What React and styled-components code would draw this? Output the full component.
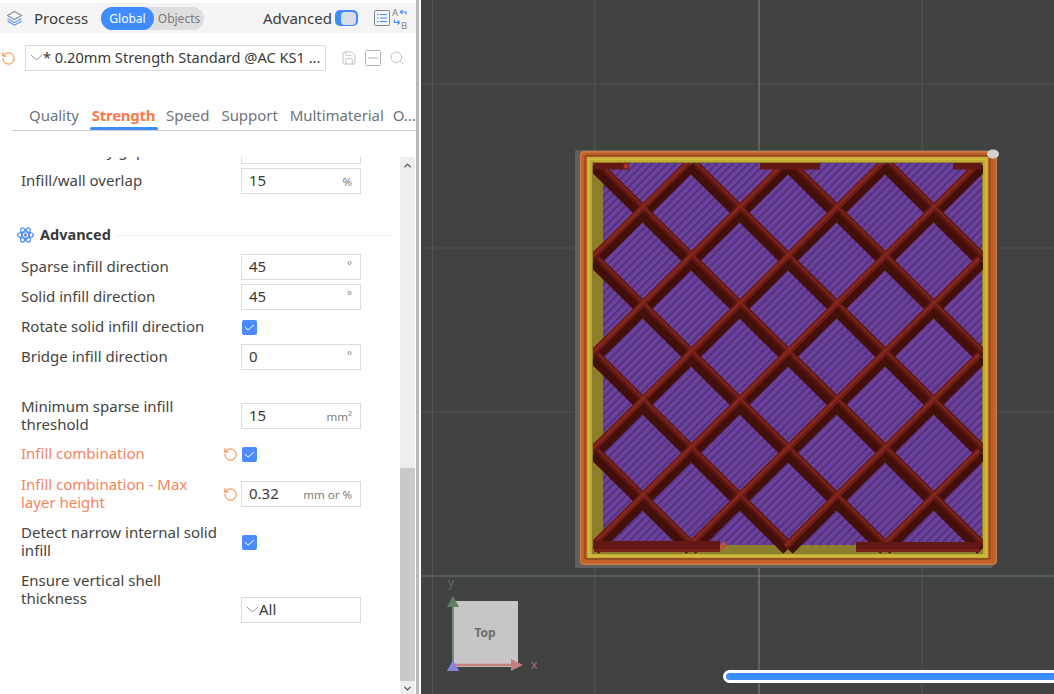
import React from "react";
import styled, { createGlobalStyle } from "styled-components";
import { RotateCcw, Save, Search, ChevronUp, ChevronDown } from "lucide-react";

const GlobalStyle = createGlobalStyle`
  html, body { margin: 0; padding: 0; height: 100%; overflow: hidden; background: #fff; }
  body { font-family: "Noto Sans", "Liberation Sans", sans-serif; color: #3a3a3a; }
`;

const Page = styled.div`
  display: flex;
  width: 1054px;
  height: 694px;
  overflow: hidden;
`;

const Sidebar = styled.div`
  flex: 0 0 416px;
  width: 416px;
  min-width: 0;
  display: flex;
  flex-direction: column;
  padding-top: 3px;
  box-sizing: border-box;
  background: #fff;
  overflow: hidden;
`;

const Divider = styled.div`
  flex: 0 0 3px;
  background: #b9b9b9;
  border-right: 2px solid #fff;
`;

const Header = styled.div`
  flex: 0 0 30px;
  display: flex;
  align-items: center;
  background: #f5f5f5;
  padding-left: 6px;
`;

const HeaderTitle = styled.span`
  font-size: 15px;
  margin-left: 11px;
  width: 67px;
  color: #3c3c3c;
`;

const ModePill = styled.div`
  display: flex;
  align-items: center;
  width: 103px;
  height: 23px;
  border-radius: 12px;
  background: #dedede;
  font-size: 12px;
`;

const ModeOption = styled.div`
  height: 100%;
  width: ${p => (p.$active ? "53px" : "50px")};
  display: flex;
  align-items: center;
  justify-content: center;
  border-radius: 12px;
  background: ${p => (p.$active ? "#3f8cff" : "transparent")};
  color: ${p => (p.$active ? "#fff" : "#7b7b7b")};
`;

const AdvancedLabel = styled.span`
  font-size: 15px;
  margin-left: 59px;
  width: 72px;
  color: #3c3c3c;
`;

const Switch = styled.div`
  width: 23px;
  height: 16px;
  border-radius: 5px;
  background: #3f8cff;
  display: flex;
  align-items: center;
  justify-content: flex-end;
  padding-right: 2px;
  box-sizing: border-box;
`;

const SwitchKnob = styled.div`
  width: 15px;
  height: 13px;
  border-radius: 4px;
  background: #d8dde8;
`;

const HeaderIcons = styled.div`
  display: flex;
  align-items: center;
  gap: 2px;
  margin-left: 16px;
`;

const PresetRow = styled.div`
  flex: 0 0 26px;
  display: flex;
  align-items: center;
  margin-top: 12px;
  padding-left: 1px;
`;

const OrangeReset = styled(RotateCcw)`
  color: #ff7a1a;
  flex: none;
`;

const PresetBox = styled.div`
  width: 301px;
  height: 26px;
  margin-left: 9px;
  border: 1px solid #dadada;
  box-sizing: border-box;
  display: flex;
  align-items: center;
  padding: 0 0 2px 4px;
  font-size: 14.6px;
  color: #3a3a3a;
  white-space: nowrap;
  overflow: hidden;
`;

const PresetTools = styled.div`
  display: flex;
  align-items: center;
  gap: 8px;
  margin-left: 15px;
  color: #b4b4b4;
`;

const Tabs = styled.div`
  flex: 0 0 41px;
  display: flex;
  align-items: flex-start;
  margin: 19px 0 0 12px;
  padding: 15px 0 0 17px;
  box-sizing: border-box;
  border-bottom: 1px solid #cfcfcf;
  font-size: 15px;
  white-space: nowrap;
`;

const Tab = styled.div`
  position: relative;
  margin-right: ${p => p.$gap}px;
  color: ${p => (p.$active ? "#f97a50" : "#6d7480")};
  font-weight: ${p => (p.$active ? 700 : 400)};
  letter-spacing: ${p => (p.$active ? "-0.3px" : "-0.05px")};
  line-height: 20px;
  &::after {
    content: "";
    display: ${p => (p.$active ? "block" : "none")};
    position: absolute;
    left: -2px;
    right: -3px;
    top: 22px;
    height: 3px;
    border-radius: 2px;
    background: #3f8cff;
  }
`;

const SettingsArea = styled.div`
  flex: 1;
  min-height: 0;
  display: flex;
  margin-top: 26px;
  overflow: hidden;
`;

const SettingsList = styled.div`
  flex: 1;
  margin-top: -19px;
`;

const Scrollbar = styled.div`
  flex: 0 0 15px;
  margin-right: 1px;
  background: #eeeeee;
  display: flex;
  flex-direction: column;
  align-items: center;
  color: #555;
`;

const ScrollThumb = styled.div`
  width: 100%;
  flex: 0 0 213px;
  margin-top: 311px;
  background: #c9c9c9;
`;

const Row = styled.div`
  display: flex;
  align-items: ${p => (p.$top ? "flex-start" : "center")};
  min-height: 26px;
  margin-top: ${p => p.$gap ?? 4}px;
`;

const Label = styled.div`
  flex: 0 0 200px;
  margin: -1px 0 1px 21px;
  font-size: 15px;
  line-height: 18px;
  color: ${p => (p.$changed ? "#f7845c" : "#444444")};
`;

const ResetSlot = styled.div`
  flex: 0 0 20px;
  display: flex;
  align-items: center;
  padding-left: 2px;
  box-sizing: border-box;
`;

const Field = styled.div`
  width: 120px;
  height: 26px;
  margin-top: ${p => p.$offset || 0}px;
  box-sizing: border-box;
  border: 1px solid #dcdcdc;
  display: flex;
  align-items: center;
  justify-content: ${p => (p.$select ? "flex-start" : "space-between")};
  padding: 0 8px 2px ${p => (p.$select ? 4 : 7)}px;
  font-size: 15px;
  color: #3a3a3a;
`;

const Unit = styled.span`
  font-size: 11.5px;
  color: #7d7d7d;
  margin-top: ${p => (p.$raise ? "-4px" : "3px")};
`;

const Check = styled.div`
  width: 15px;
  height: 15px;
  margin-left: 1px;
  border-radius: 2px;
  background: #4a8cff;
  display: flex;
  align-items: center;
  justify-content: center;
`;

const SectionHead = styled.div`
  display: flex;
  align-items: center;
  height: 18px;
  margin: 32px 7px 10px 17px;
`;

const SectionTitle = styled.span`
  margin: 0 5px 2px 6px;
  font-size: 14.5px;
  font-weight: 700;
  color: #3a3a3a;
`;

const SectionRule = styled.div`
  flex: 1;
  height: 1px;
  background: #eeeeee;
`;

const Viewport = styled.div`
  position: relative;
  flex: 1;
  background: #414342;
  overflow: hidden;
`;

const Scene = styled.svg`
  display: block;
  width: 633px;
  height: 694px;
`;

const ProgressBar = styled.div`
  position: absolute;
  left: 302px;
  right: -20px;
  top: 670px;
  height: 13px;
  box-sizing: border-box;
  border: 3px solid #fff;
  border-radius: 7px;
  background: #3f8cff;
`;

const Chevron = ({ color = "#9a9a9a" }) => (
  <svg width="13" height="7" viewBox="0 0 13 7" style={{ flex: "none" }}>
    <polyline points="1,1 6.5,6 12,1" fill="none" stroke={color} strokeWidth="1" />
  </svg>
);

const LayersIcon = () => (
  <svg width="17" height="17" viewBox="0 0 17 17">
    <path d="M8.5 1.5 L15.5 5.5 L8.5 9.5 L1.5 5.5 Z" fill="none" stroke="#8a8f96" strokeWidth="1.1" />
    <path d="M1.5 8.5 L8.5 12.5 L15.5 8.5" fill="none" stroke="#6f9fe6" strokeWidth="1.1" />
    <path d="M1.5 11 L8.5 15.2 L15.5 11" fill="none" stroke="#4a8cff" strokeWidth="1.1" />
  </svg>
);

const ListIcon = () => (
  <svg width="16" height="16" viewBox="0 0 16 16">
    <rect x="0.5" y="0.5" width="15" height="15" rx="1" fill="none" stroke="#7d858e" />
    <path d="M3 4.5h1.5M6 4.5h7M3 8h1.5M6 8h7M3 11.5h1.5M6 11.5h7" stroke="#3f8cff" strokeWidth="1" />
  </svg>
);

const SwapIcon = () => (
  <svg width="17" height="25" viewBox="0 0 17 25">
    <text x="0" y="10" fontSize="9.5" fill="#7d858e" fontFamily="Noto Sans">A</text>
    <text x="9" y="23" fontSize="9.5" fill="#7d858e" fontFamily="Noto Sans">B</text>
    <path d="M14 8.5 V6 H8.5 M10.5 4 L8.5 6 L10.5 8" fill="none" stroke="#3f8cff" strokeWidth="1.2" />
    <path d="M2.5 13.5 V16.5 H7.5 M5.5 14.5 L7.5 16.5 L5.5 18.5" fill="none" stroke="#3f8cff" strokeWidth="1.2" />
  </svg>
);

const MinusBoxIcon = () => (
  <svg width="16" height="16" viewBox="0 0 16 16">
    <rect x="0.5" y="0.5" width="15" height="15" rx="1" fill="none" stroke="#b4b4b4" />
    <path d="M3 8h10" stroke="#b4b4b4" />
  </svg>
);

const AtomIcon = () => (
  <svg width="17" height="18" viewBox="0 0 17 18">
    <g fill="none" stroke="#4a8cff" strokeWidth="1.3">
      <ellipse cx="8.5" cy="9" rx="8" ry="3.2" />
      <ellipse cx="8.5" cy="9" rx="8" ry="3.2" transform="rotate(60 8.5 9)" />
      <ellipse cx="8.5" cy="9" rx="8" ry="3.2" transform="rotate(120 8.5 9)" />
    </g>
    <circle cx="8.5" cy="9" r="1.7" fill="#7d8a9a" />
  </svg>
);

const Tick = () => (
  <svg width="11" height="8" viewBox="0 0 11 8">
    <polyline points="1,4 4,7 10,2" fill="none" stroke="#fff" strokeWidth="1" />
  </svg>
);

const Setting = ({ label, changed, gap, value, unit, raise, check, select, top, offset }) => (
  <Row $gap={gap} $top={top}>
    <Label $changed={changed}>{label}</Label>
    <ResetSlot>{changed && <OrangeReset size={15} strokeWidth={1.6} />}</ResetSlot>
    {check && <Check><Tick /></Check>}
    {value !== undefined && (
      <Field>
        <span>{value}</span>
        <Unit $raise={raise}>{unit}</Unit>
      </Field>
    )}
    {select && (
      <Field $select $offset={offset}>
        <Chevron />
        <span>{select}</span>
      </Field>
    )}
  </Row>
);

// print preview geometry, in page pixels
const X0 = 594;
const Y0 = 165;
const STEP_X = 48.5;
const STEP_Y = 48;
const px = i => X0 + i * STEP_X;
const py = j => Y0 + j * STEP_Y;

function buildLines() {
  const down = [];
  const up = [];
  for (let d = -8; d <= 8; d += 2) {
    const i0 = Math.max(0, d);
    const i1 = Math.min(8, 8 + d);
    down.push([px(i0), py(i0 - d), px(i1), py(i1 - d)]);
  }
  for (let s = 0; s <= 16; s += 2) {
    const i0 = Math.max(0, s - 8);
    const i1 = Math.min(8, s);
    up.push([px(i0), py(s - i0), px(i1), py(s - i1)]);
  }
  return { down, up };
}

// one pass over a set of struts, shifted sideways so the bead looks lit from one side
const StrutPass = ({ lines, dx = 0, dy = 0, color, width }) => (
  <g stroke={color} strokeWidth={width}>
    {lines.map(([x1, y1, x2, y2]) => (
      <line key={`${x1}-${y1}-${x2}`} x1={x1 + dx} y1={y1 + dy} x2={x2 + dx} y2={y2 + dy} />
    ))}
  </g>
);

const PrintPreview = () => {
  const { down, up } = buildLines();
  return (
    <g>
      <defs>
        <pattern id="solid" width="5.7" height="12" patternUnits="userSpaceOnUse" patternTransform="rotate(45)">
          <rect width="5.7" height="12" fill="#6c409f" />
          <rect width="2" height="12" fill="#513378" />
        </pattern>
        <clipPath id="inner">
          <rect x="593" y="163" width="390" height="391" />
        </clipPath>
      </defs>
      <rect x="575" y="150" width="418" height="418" rx="2" fill="#5f6160" />
      <rect x="580" y="151" width="417" height="414" rx="4" fill="#c2602a" />
      <rect x="580.7" y="151.7" width="415.6" height="412.6" rx="4" fill="none" stroke="#d07c3e" strokeWidth="1.4" />
      <rect x="585" y="155.5" width="405" height="403.5" rx="2" fill="none" stroke="#8a4a1e" strokeWidth="1.4" />
      <rect x="587" y="157" width="401" height="401" fill="#bfab34" />
      <rect x="589" y="159" width="397" height="397" fill="none" stroke="#d2c03c" strokeWidth="1.6" />
      <rect x="592" y="162" width="391" height="392" fill="#8c7f2c" />
      <rect x="603" y="163" width="379" height="382" fill="url(#solid)" />
      <rect x="593" y="163" width="10" height="3" fill="#6c409f" />
      <g clipPath="url(#inner)">
        <StrutPass lines={down} color="#430f0b" width={13.5} />
        <StrutPass lines={up} color="#430f0b" width={13.5} />
        <StrutPass lines={down} dx={3} dy={-3} color="#5a1611" width={6.5} />
        <StrutPass lines={up} dx={-2.6} dy={-2.6} color="#6c1c15" width={6.5} />
        <StrutPass lines={down} dx={3.6} dy={-3.6} color="#7a2219" width={2.4} />
        <StrutPass lines={up} dx={-3} dy={-3} color="#86281d" width={2.4} />
      </g>
      <g fill="#641813">
        <rect x="594" y="163" width="35" height="6.5" />
        <rect x="760" y="163" width="60" height="6.5" />
        <rect x="953" y="163" width="28" height="6.5" />
        <rect x="594" y="541" width="126" height="11" />
        <rect x="856" y="542" width="124" height="10" />
      </g>
      <g fill="#7a2018">
        <rect x="594" y="549" width="126" height="3" />
        <rect x="856" y="549" width="124" height="3" />
      </g>
      <path d="M720 545 l5 -4 l1 5 l-5 6 z" fill="#c0503c" />
      <circle cx="626" cy="166" r="2.5" fill="#a8342a" />
      <ellipse cx="993" cy="154" rx="6" ry="4.5" fill="#d2d2cc" />
    </g>
  );
};

const Grid = () => (
  <g>
    {[84, 248, 412].map(y => <line key={y} x1="421" x2="1054" y1={y} y2={y} stroke="#4f524f" />)}
    <line x1="421" x2="1054" y1="576" y2="576" stroke="#5f645f" strokeWidth="1.5" />
    {[432.5, 595, 922].map(x => <line key={x} x1={x} x2={x} y1="0" y2="694" stroke="#535553" />)}
    <line x1="759" x2="759" y1="0" y2="694" stroke="#7a7c7a" strokeWidth="1.2" />
  </g>
);

const Gizmo = () => (
  <g>
    <rect x="452" y="601" width="66" height="66" fill="#c6c6c6" />
    <text x="485" y="637" textAnchor="middle" fontSize="12" fontWeight="700" fontFamily="Noto Sans" fill="#6d6d6d">Top</text>
    <text x="448" y="587" fontSize="12" fontFamily="Noto Sans" fill="#566e58">y</text>
    <text x="531" y="669" fontSize="12" fontFamily="Noto Sans" fill="#a86e6e">x</text>
    <line x1="453" y1="604" x2="453" y2="664" stroke="#6f8f72" strokeWidth="2" />
    <path d="M447 607 L453 596 L459 607 Z" fill="#5f7f62" />
    <line x1="454" y1="665" x2="514" y2="665" stroke="#c67e7e" strokeWidth="2.4" />
    <path d="M511 659 L523 665 L511 671 Z" fill="#c67e7e" />
    <path d="M447 671 L453 660 L459 671 Z" fill="#8484d8" />
  </g>
);

export default function App() {
  return (
    <Page>
      <GlobalStyle />
      <Sidebar>
        <Header>
          <LayersIcon />
          <HeaderTitle>Process</HeaderTitle>
          <ModePill>
            <ModeOption $active>Global</ModeOption>
            <ModeOption>Objects</ModeOption>
          </ModePill>
          <AdvancedLabel>Advanced</AdvancedLabel>
          <Switch><SwitchKnob /></Switch>
          <HeaderIcons>
            <ListIcon />
            <SwapIcon />
          </HeaderIcons>
        </Header>
        <PresetRow>
          <OrangeReset size={15} strokeWidth={1.6} />
          <PresetBox>
            <Chevron />
            <span>* 0.20mm Strength Standard @AC KS1 ...</span>
          </PresetBox>
          <PresetTools>
            <Save size={16} strokeWidth={1.2} />
            <MinusBoxIcon />
            <Search size={16} strokeWidth={1.2} />
          </PresetTools>
        </PresetRow>
        <Tabs>
          <Tab $gap={13}>Quality</Tab>
          <Tab $gap={11} $active>Strength</Tab>
          <Tab $gap={12}>Speed</Tab>
          <Tab $gap={12}>Support</Tab>
          <Tab $gap={9}>Multimaterial</Tab>
          <Tab $gap={0}>O...</Tab>
        </Tabs>
        <SettingsArea>
          <SettingsList>
            <Setting gap={0} label="Filter out tiny gaps" value="0" unit="" />
            <Setting label="Infill/wall overlap" value="15" unit="%" />
            <SectionHead>
              <AtomIcon />
              <SectionTitle>Advanced</SectionTitle>
              <SectionRule />
            </SectionHead>
            <Setting gap={0} label="Sparse infill direction" value="45" unit="°" raise />
            <Setting label="Solid infill direction" value="45" unit="°" raise />
            <Setting label="Rotate solid infill direction" check />
            <Setting label="Bridge infill direction" value="0" unit="°" raise />
            <Setting gap={28} label="Minimum sparse infill threshold" value="15" unit="mm²" />
            <Setting gap={7} changed label="Infill combination" check />
            <Setting gap={9} changed label="Infill combination - Max layer height" value="0.32" unit="mm or %" />
            <Setting gap={12} label="Detect narrow internal solid infill" check />
            <Setting gap={12} top label="Ensure vertical shell thickness" select="All" offset={25} />
          </SettingsList>
          <Scrollbar>
            <ChevronUp size={11} strokeWidth={3} style={{ marginTop: 3, marginBottom: -14 }} />
            <ScrollThumb />
            <ChevronDown size={11} strokeWidth={3} style={{ marginTop: 2 }} />
          </Scrollbar>
        </SettingsArea>
      </Sidebar>
      <Divider />
      <Viewport>
        <Scene viewBox="421 0 633 694">
          <Grid />
          <PrintPreview />
          <Gizmo />
        </Scene>
        <ProgressBar />
      </Viewport>
    </Page>
  );
}
